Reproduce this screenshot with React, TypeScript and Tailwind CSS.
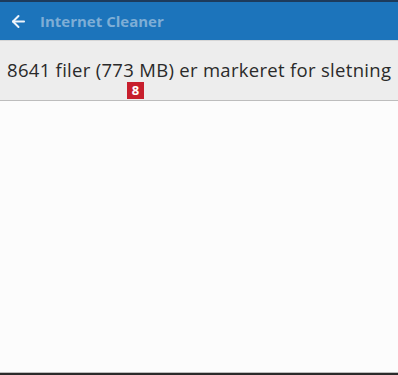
import { ArrowLeft } from "lucide-react";

export default function App() {
  return (
    <div className="flex h-[375px] w-[398px] flex-col overflow-hidden bg-[#fcfcfc] font-['Open_Sans',sans-serif]">
      <div className="h-[2px] bg-[#1d3b5c]" />
      <header className="flex h-[38px] items-center gap-[12px] bg-[#1c74bb] pl-[9px]">
        <ArrowLeft size={19} strokeWidth={2.5} className="text-[#eef4fb]" />
        <span className="text-[15px] font-bold text-[#7eaed6]">Internet Cleaner</span>
      </header>
      <div className="h-[1px] bg-[#d6d6d6]" />
      <div className="relative h-[60px] border-b border-[#bdbdbd] bg-[#ededed] pl-[7px] pt-[16px]">
        <p className="whitespace-nowrap text-[18.5px] leading-[26px] tracking-[0.3px] text-[#2a2a2a]">
          8641 filer (773 MB) er markeret for sletning
        </p>
        <span className="absolute left-[127px] top-[41px] flex h-[17px] w-[17px] items-center justify-center bg-[#c71f2d] text-[13px] font-bold leading-none text-white">
          8
        </span>
      </div>
      <div className="flex-1" />
      <div className="h-[1px] bg-[#bdbdbd]" />
      <div className="h-[2px] bg-[#2a2a2a]" />
    </div>
  );
}
